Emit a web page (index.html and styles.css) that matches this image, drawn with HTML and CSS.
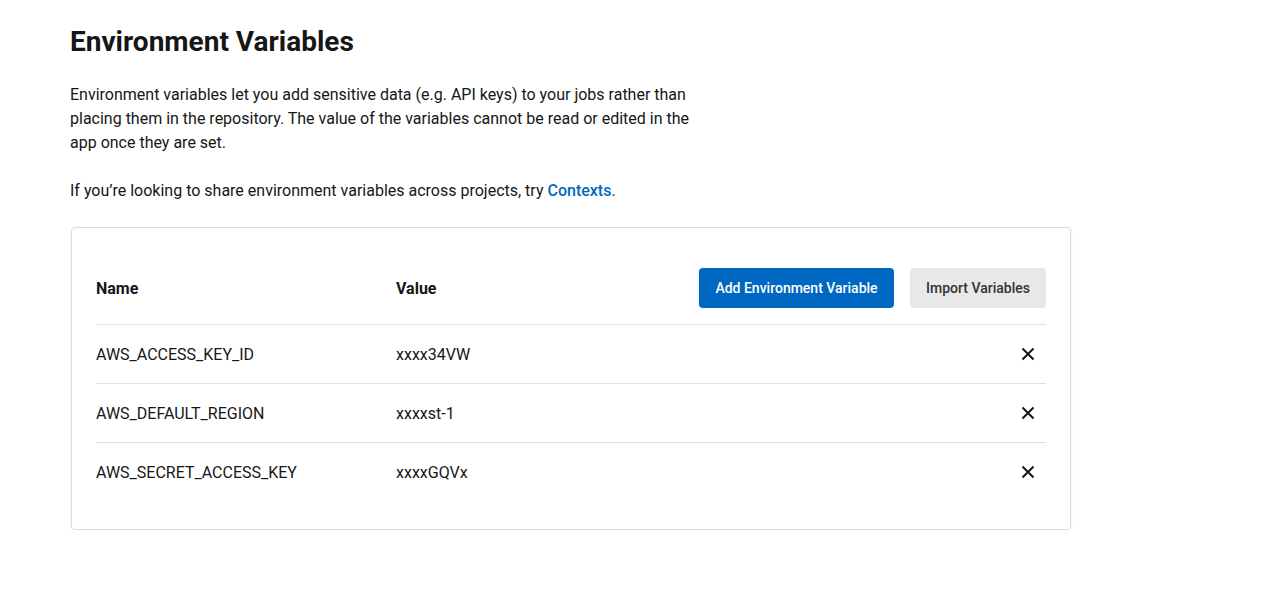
FILE: index.html
```html
<!DOCTYPE html>
<html>
<head>
<meta charset="utf-8">
<link rel="stylesheet" href="styles.css">
</head>
<body>
<main class="page">
  <h1 class="title">Environment Variables</h1>
  <p class="desc">Environment variables let you add sensitive data (e.g. API keys) to your jobs rather than placing them in the repository. The value of the variables cannot be read or edited in the app once they are set.</p>
  <p class="desc">If you’re looking to share environment variables across projects, try <a class="link" href="#">Contexts</a>.</p>
  <section class="card">
    <div class="row head">
      <div class="col-name">Name</div>
      <div class="col-value">Value</div>
      <div class="actions">
        <button class="btn primary">Add Environment Variable</button>
        <button class="btn secondary">Import Variables</button>
      </div>
    </div>
    <div class="row item">
      <div class="col-name">AWS_ACCESS_KEY_ID</div>
      <div class="col-value">xxxx34VW</div>
      <button class="del" aria-label="Delete"><svg width="14" height="14" viewBox="0 0 14 14"><path d="M1.5 1.5L12.5 12.5M12.5 1.5L1.5 12.5" stroke="#161616" stroke-width="2" fill="none"/></svg></button>
    </div>
    <div class="row item">
      <div class="col-name">AWS_DEFAULT_REGION</div>
      <div class="col-value">xxxxst-1</div>
      <button class="del" aria-label="Delete"><svg width="14" height="14" viewBox="0 0 14 14"><path d="M1.5 1.5L12.5 12.5M12.5 1.5L1.5 12.5" stroke="#161616" stroke-width="2" fill="none"/></svg></button>
    </div>
    <div class="row item">
      <div class="col-name">AWS_SECRET_ACCESS_KEY</div>
      <div class="col-value">xxxxGQVx</div>
      <button class="del" aria-label="Delete"><svg width="14" height="14" viewBox="0 0 14 14"><path d="M1.5 1.5L12.5 12.5M12.5 1.5L1.5 12.5" stroke="#161616" stroke-width="2" fill="none"/></svg></button>
    </div>
  </section>
</main>
</body>
</html>
```
FILE: styles.css
```css
* { box-sizing: border-box; }
html, body { margin: 0; background: #fff; }
body {
  font-family: Roboto, "Liberation Sans", sans-serif;
  color: #161616;
}
.page {
  padding: 26px 0 0 71px;
  width: 1071px;
}
.title {
  font-size: 28px;
  font-weight: 700;
  line-height: 32px;
  margin: 0 0 25px -1px;
}
.desc {
  font-size: 16px;
  line-height: 24px;
  margin: 0 0 24px -1px;
  max-width: 625px;
}
.link {
  color: #0068c2;
  font-weight: 500;
  text-decoration: none;
}
.card {
  border: 1px solid #dcdcdc;
  border-radius: 4px;
  box-shadow: 0 1px 3px rgba(0,0,0,0.08);
  padding: 24px 24px 28px;
}
.row {
  display: flex;
  align-items: center;
}
.head {
  padding: 16px 0;
  font-weight: 700;
  font-size: 16px;
}
.item {
  height: 59px;
  border-top: 1px solid #e0e0e0;
  font-size: 16px;
}
.col-name { width: 300px; }
.col-value { flex: 1; }
.actions { display: flex; gap: 16px; }
.btn {
  height: 40px;
  border: none;
  border-radius: 4px;
  font-family: Roboto, sans-serif;
  font-size: 14px;
  font-weight: 500;
  padding: 0 16px;
  cursor: pointer;
}
.primary { background: #0068c2; color: #fff; width: 195px; }
.secondary { background: #e8e8e8; color: #333; width: 136px; }
.del {
  background: none;
  border: none;
  padding: 0;
  width: 14px;
  height: 14px;
  margin-right: 11px;
  display: flex;
}
```
